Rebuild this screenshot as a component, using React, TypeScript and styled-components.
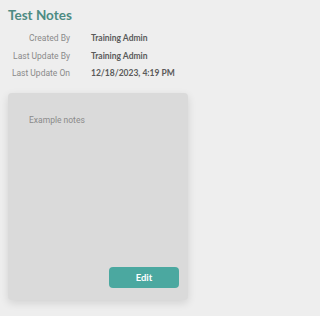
import * as React from "react";
import styled, { createGlobalStyle } from "styled-components";

const GlobalStyle = createGlobalStyle`
  html, body {
    margin: 0;
    padding: 0;
    background: #eeeeee;
  }
`;

const Page = styled.div`
  width: 200px;
  height: 316px;
  box-sizing: border-box;
  padding: 7px 12px 0 8px;
  display: flex;
  flex-direction: column;
`;

const Title = styled.h1`
  margin: 0;
  font-family: "Lato", sans-serif;
  font-size: 13.5px;
  font-weight: 700;
  color: #4d8b83;
  line-height: 17px;
`;

const Details = styled.div`
  display: grid;
  grid-template-columns: 62px 1fr;
  column-gap: 21px;
  margin-top: 6px;
`;

const Label = styled.div`
  font-family: "Roboto", sans-serif;
  font-size: 8.5px;
  color: #8a8a8a;
  text-align: right;
  line-height: 17.5px;
  white-space: nowrap;
`;

const Value = styled.div`
  font-family: "Lato", sans-serif;
  font-size: 8.5px;
  font-weight: 700;
  color: #5a5a5a;
  line-height: 17.5px;
  white-space: nowrap;
`;

const Card = styled.div`
  margin-top: 10px;
  height: 207px;
  box-sizing: border-box;
  background: #dadada;
  border-radius: 4px;
  box-shadow: 0 3px 8px rgba(0, 0, 0, 0.12);
  padding: 22px 9px 12px 21px;
  display: flex;
  flex-direction: column;
`;

const Notes = styled.p`
  margin: 0;
  flex: 1;
  font-family: "Roboto", sans-serif;
  font-size: 8.5px;
  color: #8a8a8a;
`;

const EditButton = styled.button`
  align-self: flex-end;
  width: 70px;
  height: 21px;
  border: none;
  border-radius: 4px;
  background: #4ba8a0;
  color: #ffffff;
  font-family: "Lato", sans-serif;
  font-size: 9.5px;
  font-weight: 700;
  cursor: pointer;
`;

const rows = [
  ["Created By", "Training Admin"],
  ["Last Update By", "Training Admin"],
  ["Last Update On", "12/18/2023, 4:19 PM"],
];

const App = () => (
  <>
    <GlobalStyle />
    <Page>
      <Title>Test Notes</Title>
      <Details>
        {rows.map(([label, value]) => (
          <React.Fragment key={label}>
            <Label>{label}</Label>
            <Value>{value}</Value>
          </React.Fragment>
        ))}
      </Details>
      <Card>
        <Notes>Example notes</Notes>
        <EditButton>Edit</EditButton>
      </Card>
    </Page>
  </>
);

export default App;
